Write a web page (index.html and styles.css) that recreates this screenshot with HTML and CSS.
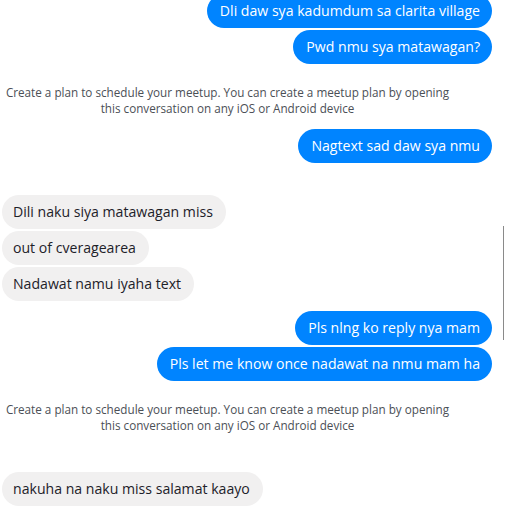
FILE: index.html
```html
<!DOCTYPE html>
<html lang="en">
<head>
  <meta charset="UTF-8" />
  <title>Conversation</title>
  <link rel="stylesheet" href="styles.css">
</head>
<body>
  <div class="chat">
    <div class="gruppe rechts oben">
      <div class="blase blau">Dli daw sya kadumdum sa clarita village</div>
      <div class="blase blau">Pwd nmu sya matawagan?</div>
    </div>
    <p class="hinweis">Create a plan to schedule your meetup. You can create a meetup plan by opening<br>this conversation on any iOS or Android device</p>
    <div class="gruppe rechts nach-hinweis">
      <div class="blase blau">Nagtext sad daw sya nmu</div>
    </div>
    <div class="gruppe links abstand">
      <div class="blase grau">Dili naku siya matawagan miss</div>
      <div class="blase grau">out of cveragearea</div>
      <div class="blase grau">Nadawat namu iyaha text</div>
    </div>
    <div class="gruppe rechts klein">
      <div class="blase blau">Pls nlng ko reply nya mam</div>
      <div class="blase blau">Pls let me know once nadawat na nmu mam ha</div>
    </div>
    <p class="hinweis">Create a plan to schedule your meetup. You can create a meetup plan by opening<br>this conversation on any iOS or Android device</p>
    <div class="gruppe links gross">
      <div class="blase grau">nakuha na naku miss salamat kaayo</div>
    </div>
  </div>
  <div class="scrollbalken"></div>
</body>
</html>
```

FILE: styles.css
```css
body {
  font-family: 'Open Sans', 'Noto Sans', sans-serif;
  background: #fff;
  margin: 0;
  overflow: hidden;
  height: 507px;
}
.chat {
  display: flex;
  flex-direction: column;
  padding: 0 15px 0 2px;
}
.gruppe {
  display: flex;
  flex-direction: column;
  gap: 2px;
}
.rechts { align-items: flex-end; }
.links { align-items: flex-start; }
.oben { margin-top: -6px; }
.nach-hinweis { margin-top: 13px; }
.abstand { margin-top: 32px; }
.klein { margin-top: 10px; }
.gross { margin-top: 39px; }
.blase {
  font-size: 14.1px;
  line-height: 22px;
  padding: 6px 12px 6px 13px;
  border-radius: 18px;
  white-space: nowrap;
}
.links .blase { padding: 6px 13px 6px 11px; }
.blau { background: #0084ff; color: #fff; }
.grau { background: #f1f0f0; color: #1d2129; }
.hinweis {
  margin: 20px 0 0;
  width: 451px;
  text-align: center;
  font-size: 11.7px;
  line-height: 16px;
  color: #4b4f56;
}
.scrollbalken {
  position: absolute;
  left: 503px;
  top: 226px;
  width: 1px;
  height: 114px;
  background: #8a8a8a;
}
```
